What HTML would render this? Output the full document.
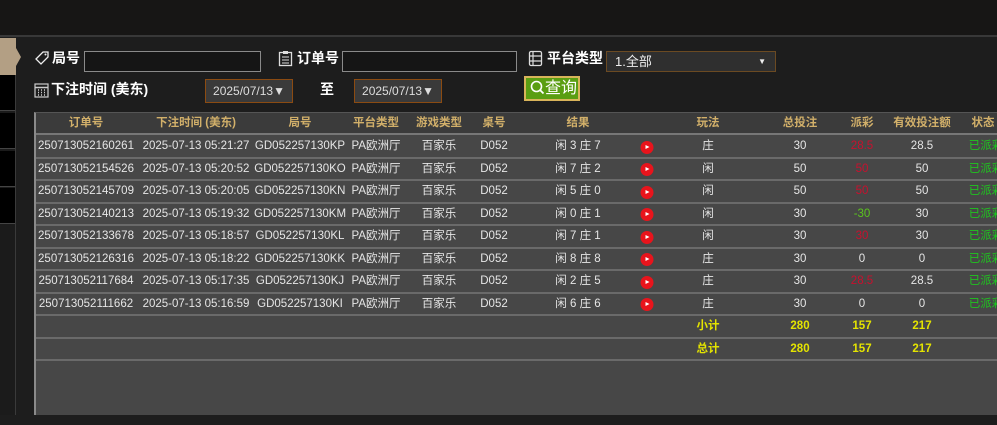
<!DOCTYPE html>
<html><head><meta charset="utf-8"><style>
*{margin:0;padding:0;box-sizing:border-box}
body{width:997px;height:425px;overflow:hidden;background:#1d1d1d;font-family:"Liberation Sans","Noto Sans CJK SC",sans-serif;position:relative;color:#e6e6e6}
.a{position:absolute}
.top{left:0;top:0;width:997px;height:37px;background:#171615;border-bottom:2px solid #383838}
.side{left:0;top:39px;width:16px;height:376px;background:#1b1b1b;border-right:1px solid #3a3a3a}
.tab{left:0;top:38px;width:16px;height:37px;background:#b39f84}
.tabarr{left:16px;top:48px;width:0;height:0;border-top:9px solid transparent;border-bottom:9px solid transparent;border-left:5px solid #b39f84}
.blk{left:0;width:15px;height:36px;background:#000;border-bottom:1px solid #444}
.lbl{font-size:14px;font-weight:bold;color:#fff}
.inp{border:1px solid #8a8a8a;background:#151515;height:21px}
.date{width:88px;height:24px;background:#3a3a3a;border:1px solid #8b4b12;font-size:12px;color:#ddd;text-align:center;line-height:22px}
.tbl{left:34px;top:112px;width:963px;height:303px;background:#474747;border-left:2px solid #8a8a8a;border-top:1px solid #555}
.hdr{left:36px;top:113px;width:961px;height:22px;background:#3b3b3b;border-bottom:2px solid #777}
.row{left:36px;width:961px;height:22.5px;border-bottom:2px solid #6a6a6a}
.c{position:absolute;top:0;line-height:21px;font-size:11.5px;transform:translateX(-50%);white-space:nowrap}
.h{color:#d2b06a;font-size:11.5px;font-weight:bold}
.r{color:#c8102e}.g{color:#5bc41e}.s{color:#1fc41f}.y{color:#e4e400;font-weight:bold}
.dot{position:absolute;top:4.5px;width:13px;height:13px;border-radius:50%;background:#e8141c;transform:translateX(-50%)}
.dot:after{content:"";position:absolute;left:5px;top:4px;border-top:2.5px solid transparent;border-bottom:2.5px solid transparent;border-left:4px solid #fff}
</style></head><body>
<div class="a top"></div>
<div class="a side"></div>
<div class="a tab"></div><div class="a tabarr"></div>
<div class="a blk" style="top:75px"></div>
<div class="a blk" style="top:113px"></div>
<div class="a blk" style="top:151px"></div>
<div class="a blk" style="top:188px"></div>

<svg class="a" style="left:34px;top:50px" width="16" height="16" viewBox="0 0 16 16"><path d="M2 9 L9 2 H14 V7 L7 14 Z" fill="none" stroke="#eee" stroke-width="1.3"/><circle cx="11.5" cy="4.5" r="1" fill="#eee"/></svg>
<div class="a lbl" style="left:52px;top:48px">局号</div>
<div class="a inp" style="left:84px;top:51px;width:177px"></div>
<svg class="a" style="left:278px;top:50px" width="15" height="17" viewBox="0 0 15 17"><rect x="1.5" y="2.5" width="12" height="13" fill="none" stroke="#ddd" stroke-width="1.3"/><rect x="5" y="1" width="5" height="3" fill="#ddd"/><path d="M4 7h7M4 10h7M4 13h7" stroke="#ddd"/></svg>
<div class="a lbl" style="left:297px;top:48px">订单号</div>
<div class="a inp" style="left:342px;top:51px;width:175px"></div>
<svg class="a" style="left:528px;top:50px" width="15" height="17" viewBox="0 0 15 17"><rect x="1.5" y="1.5" width="12" height="14" rx="1.5" fill="none" stroke="#ddd" stroke-width="1.3"/><path d="M1.5 6h12M1.5 11h12M5 1.5v14" stroke="#ddd" stroke-width="1.2"/></svg>
<div class="a lbl" style="left:547px;top:48px">平台类型</div>
<div class="a" style="left:606px;top:51px;width:170px;height:21px;background:#2f2f2f;border:1px solid #6b4a22;font-size:13px;color:#eee;line-height:19px;padding-left:8px">1.全部<span style="position:absolute;right:9px;top:0;font-size:8px">▼</span></div>

<svg class="a" style="left:34px;top:82px" width="15" height="16" viewBox="0 0 15 16"><rect x="1" y="2" width="13" height="13" fill="none" stroke="#ccc" stroke-width="1.2"/><path d="M1 5.5h13M4 8h1M7 8h1M10 8h1M4 10.5h1M7 10.5h1M10 10.5h1M4 13h1M7 13h1M10 13h1" stroke="#ccc" stroke-width="1.5"/></svg>
<div class="a lbl" style="left:51px;top:79px">下注时间 (美东)</div>
<div class="a date" style="left:205px;top:79px">2025/07/13▼</div>
<div class="a lbl" style="left:320px;top:79px">至</div>
<div class="a date" style="left:354px;top:79px">2025/07/13▼</div>
<div class="a" style="left:524px;top:76px;width:56px;height:25px;background:#5a9e12;border:2px solid #d9b45a;color:#fff;font-size:16px;line-height:21px;padding-left:4px"><svg width="15" height="15" viewBox="0 0 15 15" style="vertical-align:-2px"><circle cx="6.5" cy="6.5" r="5" fill="none" stroke="#fff" stroke-width="1.6"/><path d="M10 10l3.5 3.5" stroke="#fff" stroke-width="1.8"/></svg>查询</div>

<div class="a tbl"></div>
<div class="a hdr">
<span class="c h" style="left:50px">订单号</span><span class="c h" style="left:160px">下注时间 (美东)</span><span class="c h" style="left:264px">局号</span><span class="c h" style="left:340px">平台类型</span><span class="c h" style="left:403px">游戏类型</span><span class="c h" style="left:458px">桌号</span><span class="c h" style="left:542px">结果</span><span class="c h" style="left:672px">玩法</span><span class="c h" style="left:764px">总投注</span><span class="c h" style="left:826px">派彩</span><span class="c h" style="left:886px">有效投注额</span><span class="c h" style="left:947px">状态</span>
</div>

<div class="a row" style="top:136px"><span class="c" style="left:50px">250713052160261</span><span class="c" style="left:160px">2025-07-13 05:21:27</span><span class="c" style="left:264px">GD052257130KP</span><span class="c" style="left:340px">PA欧洲厅</span><span class="c" style="left:403px">百家乐</span><span class="c" style="left:458px">D052</span><span class="c" style="left:542px">闲 3 庄 7</span><i class="dot" style="left:611px"></i><span class="c" style="left:672px">庄</span><span class="c" style="left:764px">30</span><span class="c r" style="left:826px">28.5</span><span class="c" style="left:886px">28.5</span><span class="c s" style="left:950px">已派彩</span></div>
<div class="a row" style="top:158.5px"><span class="c" style="left:50px">250713052154526</span><span class="c" style="left:160px">2025-07-13 05:20:52</span><span class="c" style="left:264px">GD052257130KO</span><span class="c" style="left:340px">PA欧洲厅</span><span class="c" style="left:403px">百家乐</span><span class="c" style="left:458px">D052</span><span class="c" style="left:542px">闲 7 庄 2</span><i class="dot" style="left:611px"></i><span class="c" style="left:672px">闲</span><span class="c" style="left:764px">50</span><span class="c r" style="left:826px">50</span><span class="c" style="left:886px">50</span><span class="c s" style="left:950px">已派彩</span></div>
<div class="a row" style="top:181px"><span class="c" style="left:50px">250713052145709</span><span class="c" style="left:160px">2025-07-13 05:20:05</span><span class="c" style="left:264px">GD052257130KN</span><span class="c" style="left:340px">PA欧洲厅</span><span class="c" style="left:403px">百家乐</span><span class="c" style="left:458px">D052</span><span class="c" style="left:542px">闲 5 庄 0</span><i class="dot" style="left:611px"></i><span class="c" style="left:672px">闲</span><span class="c" style="left:764px">50</span><span class="c r" style="left:826px">50</span><span class="c" style="left:886px">50</span><span class="c s" style="left:950px">已派彩</span></div>
<div class="a row" style="top:203.5px"><span class="c" style="left:50px">250713052140213</span><span class="c" style="left:160px">2025-07-13 05:19:32</span><span class="c" style="left:264px">GD052257130KM</span><span class="c" style="left:340px">PA欧洲厅</span><span class="c" style="left:403px">百家乐</span><span class="c" style="left:458px">D052</span><span class="c" style="left:542px">闲 0 庄 1</span><i class="dot" style="left:611px"></i><span class="c" style="left:672px">闲</span><span class="c" style="left:764px">30</span><span class="c g" style="left:826px">-30</span><span class="c" style="left:886px">30</span><span class="c s" style="left:950px">已派彩</span></div>
<div class="a row" style="top:226px"><span class="c" style="left:50px">250713052133678</span><span class="c" style="left:160px">2025-07-13 05:18:57</span><span class="c" style="left:264px">GD052257130KL</span><span class="c" style="left:340px">PA欧洲厅</span><span class="c" style="left:403px">百家乐</span><span class="c" style="left:458px">D052</span><span class="c" style="left:542px">闲 7 庄 1</span><i class="dot" style="left:611px"></i><span class="c" style="left:672px">闲</span><span class="c" style="left:764px">30</span><span class="c r" style="left:826px">30</span><span class="c" style="left:886px">30</span><span class="c s" style="left:950px">已派彩</span></div>
<div class="a row" style="top:248.5px"><span class="c" style="left:50px">250713052126316</span><span class="c" style="left:160px">2025-07-13 05:18:22</span><span class="c" style="left:264px">GD052257130KK</span><span class="c" style="left:340px">PA欧洲厅</span><span class="c" style="left:403px">百家乐</span><span class="c" style="left:458px">D052</span><span class="c" style="left:542px">闲 8 庄 8</span><i class="dot" style="left:611px"></i><span class="c" style="left:672px">庄</span><span class="c" style="left:764px">30</span><span class="c" style="left:826px">0</span><span class="c" style="left:886px">0</span><span class="c s" style="left:950px">已派彩</span></div>
<div class="a row" style="top:271px"><span class="c" style="left:50px">250713052117684</span><span class="c" style="left:160px">2025-07-13 05:17:35</span><span class="c" style="left:264px">GD052257130KJ</span><span class="c" style="left:340px">PA欧洲厅</span><span class="c" style="left:403px">百家乐</span><span class="c" style="left:458px">D052</span><span class="c" style="left:542px">闲 2 庄 5</span><i class="dot" style="left:611px"></i><span class="c" style="left:672px">庄</span><span class="c" style="left:764px">30</span><span class="c r" style="left:826px">28.5</span><span class="c" style="left:886px">28.5</span><span class="c s" style="left:950px">已派彩</span></div>
<div class="a row" style="top:293.5px"><span class="c" style="left:50px">250713052111662</span><span class="c" style="left:160px">2025-07-13 05:16:59</span><span class="c" style="left:264px">GD052257130KI</span><span class="c" style="left:340px">PA欧洲厅</span><span class="c" style="left:403px">百家乐</span><span class="c" style="left:458px">D052</span><span class="c" style="left:542px">闲 6 庄 6</span><i class="dot" style="left:611px"></i><span class="c" style="left:672px">庄</span><span class="c" style="left:764px">30</span><span class="c" style="left:826px">0</span><span class="c" style="left:886px">0</span><span class="c s" style="left:950px">已派彩</span></div>
<div class="a row" style="top:316px"><span class="c y" style="left:672px">小计</span><span class="c y" style="left:764px">280</span><span class="c y" style="left:826px">157</span><span class="c y" style="left:886px">217</span></div>
<div class="a row" style="top:338.5px"><span class="c y" style="left:672px">总计</span><span class="c y" style="left:764px">280</span><span class="c y" style="left:826px">157</span><span class="c y" style="left:886px">217</span></div>
</body></html>
